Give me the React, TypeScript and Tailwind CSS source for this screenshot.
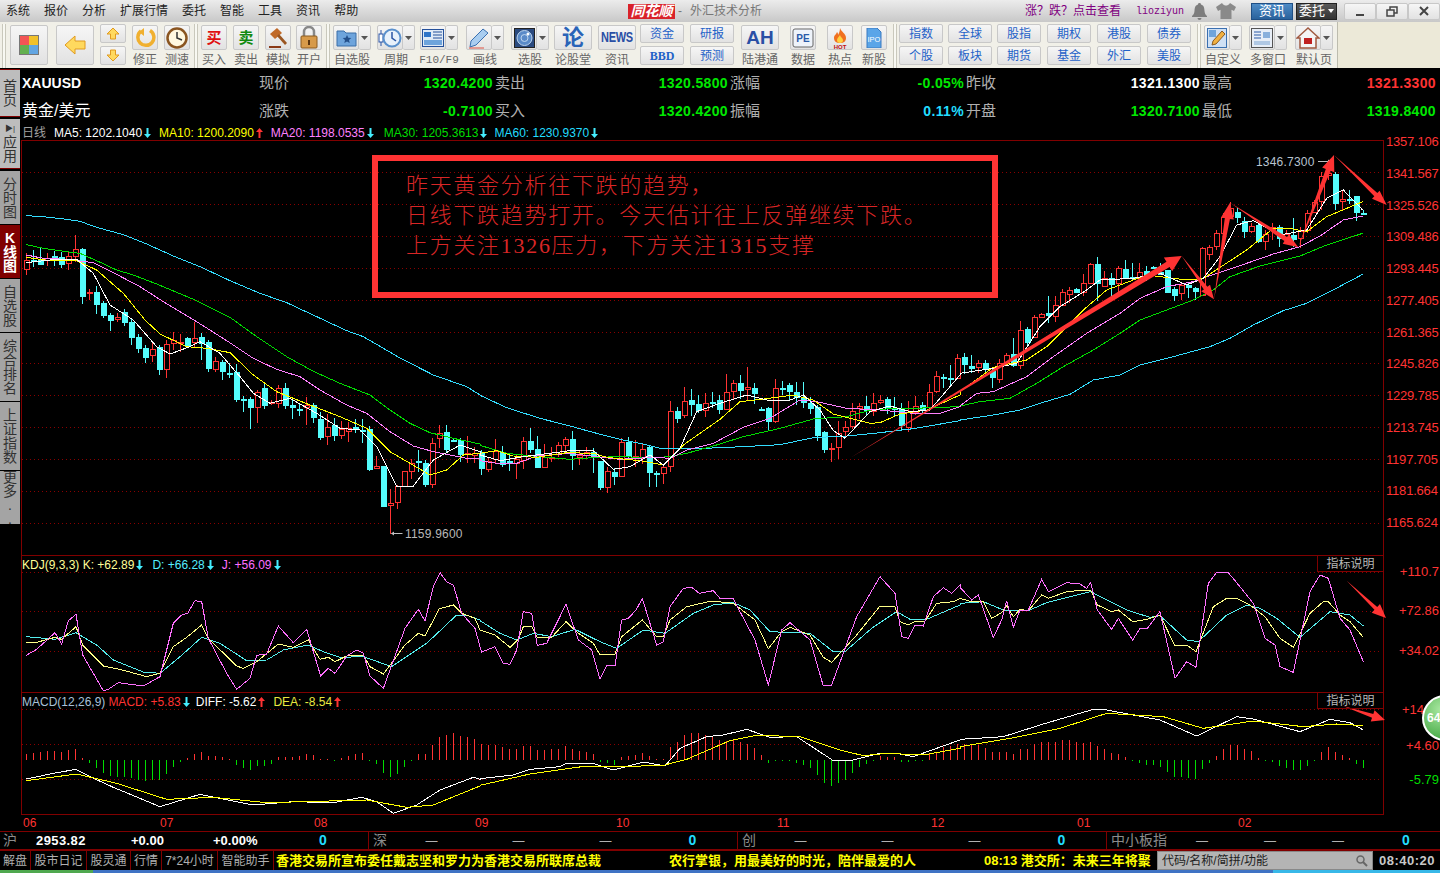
import type { ReactNode } from "react";

// coordinates below were read off 3x crops: (page x - ox) * 3, (page y - oy) * 3
const z = (ox: number, oy: number, s: string) =>
  s
    .trim()
    .split(/\s+/)
    .map((p) => {
      const [x, y] = p.split(",").map(Number);
      return `${ox + x / 3},${oy + y / 3}`;
    })
    .join(" ");

const CANDLES_A = `r370,390,418,435 c360,390,393,410 c352,388,402,404 r370,385,390,408 c362,378,383,408 c365,382,402,415 r365,378,400,420 r315,358,378,395 c355,358,497,522 r478,486,489,510 c468,486,522,552 c512,518,554,565 c550,556,570,602 r548,562,566,575 c538,546,575,588 c565,575,620,645 c612,620,653,668 c645,654,680,698 r640,658,676,696 c645,650,718,735 r630,643,718,745 r605,630,640,660 r612,636,640,665 c620,625,648,650 r575,625,635,652 c610,622,638,690 c630,636,713,725 r682,694,716,725 c690,696,724,750 c700,728,730,745 c702,727,806,815 c798,808,810,845 c800,808,830,898 r780,786,830,878 c760,775,824,838 r810,815,820,825 r765,773,820,833 c760,775,826,838 c810,826,832,868 c820,838,840,858 r800,826,832,884 c820,826,862,880 c845,868,920,930 r852,892,918,945 c865,885,916,932 r873,898,916,926 r875,893,902,935 c868,892,897,908 c868,900,902,938 c888,898,1016,1022 r978,1008,1014,1018 c1008,1008,1128,1132 r1078,1120,1126,1212 r1065,1068,1116,1138 r1024,1024,1068,1070 r988,998,1024,1048 c960,992,997,1025 c990,1000,1062,1070 r925,938,1062,1073 r885,908,925,955 c885,906,958,970 c928,930,932,935 c925,930,972,995 r918,968,970,998 r950,970,974,998`;
const CANDLES_B = `c330,340,385,405 r355,362,388,395 r297,332,358,370 c318,335,372,382 c340,362,368,392 r345,358,370,417 r292,304,360,388 c265,303,328,340 c288,328,380,382 r312,350,380,382 r320,350,352,366 r305,316,342,352 r292,298,315,340 c272,297,345,390 r332,345,352,375 r322,335,345,358 c325,335,348,398 c362,364,440,450 r380,392,440,458 c385,397,408,435 r295,307,408,410 c292,305,348,360 r300,348,352,380 r308,328,350,372 c316,320,395,440 c392,400,402,440 r376,380,400,432 r183,214,377,395 c200,214,235,248 r142,184,224,235 c148,180,192,228 c165,193,210,218 r160,188,210,230 c155,187,190,205 c165,181,208,222 r102,157,206,208 r120,130,152,180 c105,130,150,178 r82,142,148,180 c130,145,158,192 c200,206,208,212 c200,205,243,270 r118,145,243,250 c124,144,146,165 c128,136,153,182 c125,157,172,195 c126,172,185,203 c172,190,204,222 c195,200,285,302 c272,277,327,340 r310,323,326,365 r244,278,320,357 r242,260,272,295 r190,214,258,268 r188,197,205,238 c168,198,210,225 r160,190,212,228 r166,179,185,192 c170,178,205,222 c172,205,208,228 c188,208,255,270 r184,215,262,275 r168,197,215,225 c185,195,207,220 r132,157,202,210 r92,108,152,158 c103,110,113,145 c75,113,117,135 r43,55,115,118`;
const CANDLES_C = `c670,680,703,732 c675,708,714,730 r690,698,710,728 c690,700,716,728 c716,722,740,775 r686,698,748,758 r670,676,695,705 c625,672,706,710 r574,601,705,716 c590,597,636,648 r555,562,620,622 r550,551,560,560 c498,550,556,580 r498,524,558,575 r478,487,524,526 r470,480,493,518 c474,478,486,488 r432,458,485,498 r398,401,458,460 c380,402,458,512 r422,443,468,472 c430,444,462,498 r408,414,460,490 c390,418,445,448 c400,440,443,450 r398,425,440,452 c408,423,437,452 c408,411,413,415 c400,425,432,435 c420,420,485,490 c470,477,495,512 r462,464,490,510 c460,466,472,505 c470,474,484,510 r352,354,495,498 r345,350,372,390 r300,310,348,360 r250,260,310,330 r215,235,258,262 c235,245,262,280 c262,272,302,323 r278,287,302,310 c280,285,332,338 r300,312,332,360 r280,291,298,330 c285,292,324,350 r300,312,326,335 c265,316,326,352 r290,302,325,355 r240,248,300,308 r210,215,245,250 r125,137,212,240 r125,130,134,150 c125,133,218,240 r180,208,214,240 c180,208,210,222 c198,198,245,272 c240,248,250,252`;

type Candle = { up: boolean; hi: number; top: number; bot: number; lo: number };
const parseCandles = (s: string, off: number): Candle[] =>
  s
    .trim()
    .split(/\s+/)
    .map((t) => {
      const [hi, top, bot, lo] = t.slice(1).split(",").map(Number);
      const y = (v: number) => Math.round(130 + (v + off) / 3);
      return { up: t[0] === "r", hi: y(hi), top: y(top), bot: y(bot), lo: y(lo) };
    });
const CANDLES = [...parseCandles(CANDLES_A, 0), ...parseCandles(CANDLES_B, 630), ...parseCandles(CANDLES_C, 0)];

const MA_LINES = [
  {
    color: "#33ddff",
    pts: [
      z(0, 130, "79,257 130,260 200,268 240,274 290,292 370,314 440,342 520,378 600,410 690,452 780,490 860,518 950,560 1040,602 1090,620 1200,684 1300,735 1400,770 1440,795"),
      z(480, 340, "0,166 80,203 180,235 270,258 350,280 430,300 480,310 540,325 650,326 790,320 900,314 1000,293 1100,288 1200,278 1300,266 1440,242"),
      z(960, 130, "0,870 100,855 180,840 240,820 330,793 400,750 480,735 540,705 640,680 750,650 810,625 880,585 970,542 1040,520 1100,490 1208,433"),
    ],
  },
  {
    color: "#00dd00",
    pts: [
      z(0, 130, "79,344 130,355 200,365 240,370 290,392 350,420 400,435 470,462 590,512 690,562 770,620 860,680 940,724 1020,760 1110,795 1170,840 1230,880 1290,908 1360,925 1440,942"),
      z(480, 340, "0,316 80,340 180,350 270,358 350,352 420,350 520,353 570,350 620,340 700,318 790,290 900,265 1000,237 1100,230 1180,208 1300,205 1440,200"),
      z(960, 130, "0,828 60,815 150,805 230,760 310,710 400,660 480,610 540,570 620,540 700,510 760,480 810,440 900,408 1020,378 1100,345 1208,310"),
    ],
  },
  {
    color: "#ff80ff",
    pts: [
      z(0, 130, "79,375 130,385 200,388 280,398 340,428 420,470 490,515 590,575 680,632 760,685 830,718 900,740 960,780 1040,825 1100,850 1170,905 1240,948 1300,965 1400,985 1440,985"),
      z(480, 340, "0,362 50,370 110,370 170,348 270,340 350,350 420,358 520,352 570,355 620,330 700,310 790,262 870,235 960,180 1010,185 1100,205 1200,210 1300,220 1380,220 1440,200"),
      z(960, 130, "0,828 50,790 100,785 200,740 280,680 380,610 480,550 540,505 620,470 700,455 770,430 860,400 940,372 1020,350 1080,318 1150,270 1208,258"),
    ],
  },
  {
    color: "#ffff00",
    pts: [
      z(0, 130, "79,382 150,392 230,392 290,420 370,490 435,570 480,612 560,650 620,655 690,668 760,735 830,785 930,825 1020,860 1100,895 1170,965 1290,1035 1340,1020 1390,975 1440,970"),
      z(480, 340, "0,340 50,332 100,348 170,352 260,338 340,340 380,352 480,362 550,375 610,315 720,238 780,185 860,176 940,165 1000,180 1060,222 1170,250 1200,248 1260,222 1340,210 1440,165"),
      z(960, 130, "0,785 100,712 200,690 260,650 370,540 440,480 560,435 680,450 730,445 860,360 940,295 990,295 1040,305 1100,260 1208,215"),
    ],
  },
  {
    color: "#ffffff",
    pts: [
      z(0, 130, "79,398 150,390 230,388 280,430 330,525 400,570 470,650 510,672 570,650 600,635 660,670 720,740 760,790 810,820 870,805 950,850 1020,895 1080,900 1130,950 1190,1068 1240,1068 1300,990 1380,945 1440,965"),
      z(480, 340, "0,345 60,362 130,350 270,332 340,332 400,388 450,380 510,345 550,375 600,325 650,215 720,190 800,165 860,180 930,180 970,165 1020,210 1060,272 1095,295 1170,215 1230,198 1290,215 1350,210 1440,105"),
      z(960, 130, "0,730 100,715 170,700 240,590 300,530 380,480 420,450 520,445 600,430 680,465 730,445 780,380 830,285 880,272 960,315 1040,300 1100,205 1150,180 1208,240"),
    ],
  },
];

const KDJ_LINES = [
  {
    color: "#55eeee",
    pts: [
      z(0, 550, "79,260 165,268 228,248 290,285 340,330 430,366 480,370 540,320 605,262 660,280 740,332 800,330 850,300 925,285 970,305 1020,322 1090,320 1175,350 1280,280 1370,195 1400,195 1440,210"),
      z(480, 550, "0,212 60,250 110,270 160,250 215,260 285,238 360,275 410,295 490,240 555,250 640,190 700,165 760,158 810,180 870,245 990,250 1060,305 1095,305 1175,235 1250,185 1290,208 1335,210 1440,165"),
      z(960, 550, "0,160 70,155 130,180 205,182 260,158 390,125 500,180 570,202 600,197 680,270 715,275 800,195 860,165 900,175 950,205 1020,262 1110,185 1170,195 1210,228"),
    ],
  },
  {
    color: "#ffff88",
    pts: [
      z(0, 550, "79,277 110,277 165,262 185,268 228,230 248,285 310,348 360,358 440,380 480,370 520,290 560,262 605,225 625,265 710,348 730,355 770,335 835,282 880,292 925,270 960,328 985,322 1005,335 1040,318 1090,315 1110,350 1150,372 1215,285 1255,250 1275,258 1318,176 1360,165 1385,190 1425,205 1440,240"),
      z(480, 550, "0,240 45,255 90,292 115,268 130,230 155,230 172,264 215,262 258,215 295,250 340,280 360,315 405,312 425,260 487,210 530,260 550,260 570,210 620,170 695,153 760,160 825,210 865,296 905,245 930,232 990,255 1030,322 1055,337 1130,255 1200,168 1245,170 1260,215 1285,225 1305,215 1335,213 1370,160 1420,155 1440,145"),
      z(960, 550, "0,145 35,155 70,155 95,205 125,188 140,168 160,200 180,178 205,182 245,135 265,145 320,125 375,120 392,120 412,165 455,185 475,180 518,215 560,208 600,195 645,288 680,285 708,305 760,170 800,145 830,145 870,165 915,200 960,265 1000,292 1050,190 1090,155 1105,155 1140,195 1170,215 1210,262"),
    ],
  },
  {
    color: "#ff70ff",
    pts: [
      z(0, 550, "79,316 110,298 165,248 185,282 205,212 228,193 248,315 310,422 325,418 355,398 430,408 480,380 520,220 545,195 563,190 585,152 605,155 625,265 680,370 710,418 750,385 770,316 800,312 835,228 880,278 920,238 962,378 985,355 1005,370 1040,318 1070,300 1090,310 1110,378 1150,415 1215,235 1255,178 1275,213 1300,110 1320,68 1340,95 1360,105 1385,190 1425,235 1440,290"),
      z(480, 550, "0,292 5,306 45,290 70,340 90,343 110,300 130,185 155,190 172,286 200,280 258,163 295,270 335,300 360,388 380,347 405,347 425,210 445,205 468,180 487,146 530,285 550,275 570,170 610,115 635,112 658,130 700,122 720,145 760,147 825,270 865,405 905,240 930,218 990,270 1030,408 1055,405 1130,200 1200,80 1245,130 1265,260 1285,265 1305,225 1330,228 1360,140 1390,113 1415,130 1440,105"),
      z(960, 550, "0,112 35,150 55,135 100,262 125,210 140,152 160,232 180,180 205,180 245,88 265,125 320,98 360,102 380,115 392,97 412,180 455,238 475,205 518,270 540,235 562,235 600,185 645,385 680,335 708,352 745,100 770,67 805,68 830,98 880,160 915,265 945,285 960,350 1000,367 1050,125 1080,75 1105,85 1140,205 1170,240 1210,335"),
    ],
  },
];

const MACD_LINES = [
  {
    color: "#ffffff",
    pts: [
      z(0, 550, "79,687 160,670 228,658 270,680 340,712 480,770 600,733 760,765 880,755 1000,758 1085,742 1130,755 1180,790 1250,765 1320,720 1420,682 1440,688"),
      z(480, 550, "0,686 100,675 150,658 240,650 260,640 340,640 400,660 490,636 555,648 600,595 680,560 730,555 800,538 870,562 950,560 1060,632 1110,632 1200,610 1250,610 1300,620 1440,570"),
      z(960, 550, "0,568 130,560 250,522 400,478 440,480 600,510 710,558 830,500 880,507 1020,545 1110,508 1170,518 1210,540"),
    ],
  },
  {
    color: "#ffff00",
    pts: [
      z(0, 550, "79,692 230,672 350,700 500,748 640,742 800,758 1100,750 1220,772 1300,765 1440,708"),
      z(480, 550, "0,706 150,672 320,648 420,650 550,646 620,628 750,572 830,556 960,560 1080,600 1150,617 1220,610 1330,615 1440,595"),
      z(960, 550, "0,590 150,565 300,535 440,490 610,500 730,535 880,513 1030,530 1130,522 1210,527"),
    ],
  },
];

const MACD_BARS = [
  612, 610, 606, 603, 603, 606, 600, 597, 625, 638, 655, 670, 678, 680, 682, 685, 690, 692, 690, 690, 672, 652, 636, 625, 612, 605, 618, 618, 622, 626, 645, 653, 660, 648, 648, 642, 622, 622, 622, 618, 612, 615, 627, 627, 630, 625, 618, 612, 608, 632, 642, 668, 680, 672, 652, 630, 612, 612, 585, 560, 555, 548, 558, 562, 568,
  582, 585, 585, 590, 598, 598, 588, 588, 600, 600, 598, 597, 588, 598, 603, 606, 612, 636, 640, 645, 622, 618, 615, 610, 618, 626, 626, 590, 575, 555, 550, 550, 555, 560, 570, 572, 570, 576, 582, 595, 615, 638, 632, 630, 630, 640, 645, 655, 675, 698, 708, 700, 690, 668, 650, 642, 630, 618, 620, 620, 636, 636, 630, 630, 612, 605, 592, 588, 582,
  582, 585, 585, 595, 605, 605, 605, 612, 597, 597, 582, 577, 577, 577, 570, 570, 575, 580, 575, 588, 597, 610, 612, 622, 630, 638, 645, 645, 652, 667, 682, 682, 685, 688, 657, 640, 618, 597, 585, 585, 597, 603, 625, 630, 635, 648, 655, 660, 660, 648, 632, 605, 591, 606, 615, 625, 642, 655,
];

const arrowPts = (tx: number, ty: number, px: number, py: number, hl = 15, hw = 7, bw = 2.6) => {
  const len = Math.hypot(px - tx, py - ty);
  const dx = (px - tx) / len;
  const dy = (py - ty) / len;
  const bx = px - dx * hl;
  const by = py - dy * hl;
  const nx = -dy;
  const ny = dx;
  return [
    [tx, ty],
    [bx + nx * bw, by + ny * bw],
    [bx + nx * hw, by + ny * hw],
    [px, py],
    [bx - nx * hw, by - ny * hw],
    [bx - nx * bw, by - ny * bw],
  ]
    .map((p) => p.join(","))
    .join(" ");
};

const MAIN_GRID = [172, 204, 236, 268, 300, 332, 363, 395, 427, 459, 491, 523];
const AXIS_LABELS = ["1357.106", "1341.567", "1325.526", "1309.486", "1293.445", "1277.405", "1261.365", "1245.826", "1229.785", "1213.745", "1197.705", "1181.664", "1165.624"];

const Dots = ({ ys }: { ys: number[] }) => (
  <>
    {ys.map((y) => (
      <line key={y} x1={22} x2={1382} y1={y + 0.5} y2={y + 0.5} stroke="#8a0000" strokeDasharray="1 3" />
    ))}
  </>
);

const Arrow = ({ up, className = "" }: { up: boolean; className?: string }) => (
  <svg width="7" height="10" viewBox="0 0 7 10" className={`mx-[2px] inline-block ${className}`}>
    {up ? <path d="M3.5 0 7 4H4.5v6h-2V4H0z" fill="#ff3333" /> : <path d="M3.5 10 7 6H4.5V0h-2v6H0z" fill="#44eeff" />}
  </svg>
);

const TABS = [
  { t: "首页", c: "h-[48px] mb-[2px] bg-[#bdbdbd] border-y border-[#800000]" },
  { t: "应用", c: "h-[50px] mb-[2px] bg-[#bdbdbd] border-b border-[#800000]", icon: true },
  { t: "分时图", c: "h-[53px] mb-[1px] bg-[#a4a4a4]" },
  { t: "K线图", c: "h-[53px] mb-[1px] bg-[#800000] text-white font-bold" },
  { t: "自选股", c: "h-[53px] mb-[1px] bg-[#a4a4a4]" },
  { t: "综合排名", c: "h-[68px] mb-[1px] bg-[#a4a4a4]" },
  { t: "上证指数", c: "h-[68px] mb-[1px] bg-[#a4a4a4]" },
  { t: "更多..", c: "h-[53px] bg-[#a4a4a4]" },
];

const BtnFace = ({ children, className = "" }: { children: ReactNode; className?: string }) => (
  <div className={`flex items-center justify-center rounded-[2px] border border-[#c8c8c8] bg-gradient-to-b from-[#f6f6f6] to-[#e2e2e2] ${className}`}>{children}</div>
);

const Tool = ({ label, cls, split, children, labelCls = "" }: { label: string; cls: string; split?: boolean; children: ReactNode; labelCls?: string }) => (
  <div className={`mt-[1px] flex shrink-0 flex-col items-center ${cls}`}>
    <div className="flex h-[25px] w-full">
      <BtnFace className="min-w-0 flex-1">{children}</BtnFace>
      {split && (
        <BtnFace className="w-[12px] border-l-0">
          <svg width="7" height="4" viewBox="0 0 7 4">
            <path d="M0 0h7L3.5 4z" fill="#555" />
          </svg>
        </BtnFace>
      )}
    </div>
    <span className={`mt-[2px] whitespace-nowrap text-[12px] leading-[16px] text-[#666] ${labelCls}`}>{label}</span>
  </div>
);

const Pair = ({ a, b, cls, serif }: { a: string; b: string; cls: string; serif?: boolean }) => (
  <div className={`flex shrink-0 flex-col gap-[3px] text-[12px] text-[#1f62c8] ${cls}`}>
    <BtnFace className="h-[19px]">{a}</BtnFace>
    <BtnFace className={`h-[19px] ${serif ? "font-['Liberation_Serif'] font-bold" : ""}`}>{b}</BtnFace>
  </div>
);

const Sep = ({ cls }: { cls: string }) => (
  <div className={`h-[44px] w-[4px] shrink-0 border-x border-[#c9c8bc] bg-[#f8f8f2] ${cls}`} />
);

const Quote = ({ label, value, color }: { label: string; value: string; color: string }) => (
  <div className="flex h-[28px] items-center justify-between pr-[2px]">
    <span className="text-[15px] text-[#b0b0b0]">{label}</span>
    <span className={`text-[14px] font-bold tracking-[0.35px] ${color}`}>{value}</span>
  </div>
);

const AxisLabel = ({ children, cls }: { children: ReactNode; cls: string }) => (
  <div className={`whitespace-nowrap text-[13px] leading-[16px] ${cls}`}>{children}</div>
);

const IndexStat = ({ name, nameCls, cell }: { name: string; nameCls: string; cell: string }) => (
  <div className="flex h-full items-center border-l border-[#800000] font-normal">
    <span className={`whitespace-nowrap pl-[4px] text-[14px] text-[#8c8c8c] ${nameCls}`}>{name}</span>
    {[0, 1, 2].map((i) => (
      <span key={i} className={`text-center text-[12px] text-[#b0b0b0] ${cell}`}>
        —
      </span>
    ))}
    <span className={`text-center text-[14px] font-bold text-[#22ddff] ${cell}`}>0</span>
  </div>
);

export default function App() {
  return (
    <div className="flex h-[873px] w-[1440px] flex-col overflow-hidden bg-black font-['Liberation_Sans','Noto_Sans_CJK_SC',sans-serif]">
      {/* TITLE BAR */}
      <div className="flex h-[22px] shrink-0 items-center bg-gradient-to-b from-[#ececec] to-[#c8c8c8] text-[12px] text-[#222]">
        <div className="ml-[6px] flex w-[351px] gap-[14px] whitespace-nowrap">
          <span>系统</span>
          <span>报价</span>
          <span>分析</span>
          <span>扩展行情</span>
          <span>委托</span>
          <span>智能</span>
          <span>工具</span>
          <span>资讯</span>
          <span>帮助</span>
        </div>
        <div className="ml-[271px] flex h-[15px] w-[47px] items-center justify-center bg-[#d9222a] text-[14px] font-bold italic leading-none text-white">同花顺</div>
        <span className="ml-[3px] flex w-[85px] gap-[8px] whitespace-nowrap text-[12px] text-[#777]">
          <span>-</span>
          <span>外汇技术分析</span>
        </span>
        <span className="ml-[262px] w-[96px] whitespace-nowrap text-[12px] text-[#800080]">涨？跌？点击查看</span>
        <span className="ml-[15px] w-[49px] font-['Liberation_Mono'] text-[10px] text-[#800080]">lioziyun</span>
        <svg className="ml-[7px]" width="15" height="17" viewBox="0 0 15 17">
          <path d="M7.5 0a1.5 1.5 0 0 1 1.5 1.6C12 2.4 12.3 5 12.5 8c.2 2.4 1 3.7 2.5 5v1H0v-1c1.5-1.3 2.300-2.600 2.500-5C2.700 5 3 2.400 6 1.600A1.500 1.500 0 0 1 7.500 0zM5.500 15h4a2 2 0 0 1-4 0z" fill="#7d7d7d" />
        </svg>
        <svg className="ml-[9px]" width="20" height="16" viewBox="0 0 20 16">
          <path d="M6 0 0 4l2 4 2.500-1.200V16h11V6.800L18 8l2-4-6-4c-1 2-3 2.500-4 2.500S7 2 6 0z" fill="#8a8a8a" />
        </svg>
        <div className="ml-[15px] flex h-[17px] w-[42px] items-center justify-center border border-[#1f4f85] bg-gradient-to-b from-[#4d8bc6] to-[#2a629c] text-[13px] text-white">资讯</div>
        <div className="ml-[3px] flex h-[17px] w-[41px] items-center justify-center gap-[3px] border border-[#222] bg-gradient-to-b from-[#5a5a5a] to-[#333] text-[13px] text-white">
          委托
          <svg width="6" height="4" viewBox="0 0 6 4">
            <path d="M0 0h6L3 4z" fill="#fff" />
          </svg>
        </div>
        <div className="ml-[7px] flex h-[17px] w-[96px]">
          {["min", "max", "close"].map((k) => (
            <BtnFace key={k} className="h-full w-[32px] border-[#aaa] from-[#e8e8e8] to-[#c6c6c6]">
              <svg width="14" height="12" viewBox="0 0 14 12" fill="none" stroke="#444" strokeWidth="1.500">
                {k === "min" && <path d="M3 10h8" strokeWidth="2" />}
                {k === "max" && <path d="M2 5h7v6H2zM5 5V2h7v6h-3" />}
                {k === "close" && <path d="m3 2 8 8M11 2l-8 8" strokeWidth="2" />}
              </svg>
            </BtnFace>
          ))}
        </div>
      </div>

      {/* TOOLBAR */}
      <div className="flex h-[46px] shrink-0 bg-[#ece9d8]">
        <div className="flex h-full w-[1338px] items-start border-r border-[#bdbcae] bg-[#f1f0e8] pt-[2px]">
          <Sep cls="ml-[2px]" />
          <BtnFace className="ml-[4px] mt-[1px] h-[40px] w-[38px] shrink-0">
            <div className="grid h-[20px] w-[20px] grid-cols-2 border border-[#777]">
              <div className="bg-[#f25555]" />
              <div className="bg-[#f1c12a]" />
              <div className="bg-[#63b04f]" />
              <div className="bg-[#62a5e2]" />
            </div>
          </BtnFace>
          <BtnFace className="ml-[8px] mt-[1px] h-[40px] w-[38px] shrink-0">
            <svg width="22" height="20" viewBox="0 0 22 20">
              <path d="M1 10 11 1v5h10v8H11v5z" fill="#ffd95e" stroke="#e09a20" />
            </svg>
          </BtnFace>
          <div className="ml-[6px] flex w-[26px] shrink-0 flex-col gap-[3px]">
            <BtnFace className="h-[19px]">
              <svg width="14" height="13" viewBox="0 0 14 13">
                <path d="M7 1 13 7H9.500v5h-5V7H1z" fill="#ffd95e" stroke="#e09a20" />
              </svg>
            </BtnFace>
            <BtnFace className="h-[19px]">
              <svg width="14" height="13" viewBox="0 0 14 13">
                <path d="M7 12 1 6h3.500V1h5v5H13z" fill="#ffd95e" stroke="#e09a20" />
              </svg>
            </BtnFace>
          </div>
          <Tool label="修正" cls="ml-[6px] w-[26px]">
            <svg width="22" height="22" viewBox="0 0 22 22" fill="none">
              <path d="M7 4a8 8 0 1 0 9-.500" stroke="#f0b030" strokeWidth="3.500" />
              <path d="M10 1v8L5 5z" fill="#f0b030" />
            </svg>
          </Tool>
          <Tool label="测速" cls="ml-[6px] w-[26px]">
            <svg width="22" height="22" viewBox="0 0 22 22">
              <circle cx="11" cy="11" r="9.500" fill="#fff8e0" stroke="#8a5520" strokeWidth="2.500" />
              <path d="M11 5v6l5 2" fill="none" stroke="#333" strokeWidth="1.500" />
            </svg>
          </Tool>
          <Sep cls="ml-[4px]" />
          <Tool label="买入" cls="ml-[3px] w-[26px]">
            <span className="text-[15px] font-bold leading-none text-[#e01010]">买</span>
          </Tool>
          <Tool label="卖出" cls="ml-[6px] w-[26px]">
            <span className="text-[15px] font-bold leading-none text-[#108a10]">卖</span>
          </Tool>
          <Tool label="模拟" cls="ml-[6px] w-[26px]">
            <svg width="22" height="22" viewBox="0 0 22 22">
              <path d="M3 7 10 1l5 5-7 6z" fill="#c06a28" />
              <path d="m10 9 2-2 8 9-2 2z" fill="#9a5520" />
              <path d="M2 19h12v2H2z" fill="#8a3a18" />
            </svg>
          </Tool>
          <Tool label="开户" cls="ml-[5px] w-[26px]">
            <svg width="20" height="23" viewBox="0 0 20 23">
              <path d="M5 11V6a5 5 0 0 1 10 0v5" fill="none" stroke="#888" strokeWidth="2.500" />
              <rect x="2" y="10" width="16" height="12" rx="1" fill="#d79a4a" stroke="#8a5a20" />
              <path d="M9 14h2v5H9z" fill="#5a3510" />
            </svg>
          </Tool>
          <Sep cls="ml-[4px]" />
          <Tool label="自选股" cls="ml-[3px] w-[38px]" split>
            <svg width="21" height="19" viewBox="0 0 21 19">
              <path d="M1 3h7l2 2h10v13H1z" fill="#6ea4dc" stroke="#3a6ea8" />
              <path d="m11 7 1.300 2.800 3 .3-2.300 2 .7 3-2.700-1.600-2.700 1.600.7-3-2.300-2 3-.3z" fill="#244f8a" />
            </svg>
          </Tool>
          <Tool label="周期" cls="ml-[6px] w-[38px]" split>
            <svg width="24" height="22" viewBox="0 0 24 22">
              <path d="M3 3v16" stroke="#2a55a5" />
              <rect x="1" y="7" width="4" height="8" fill="#fff" stroke="#2a55a5" />
              <circle cx="14" cy="11" r="8.500" fill="#e8f1fb" stroke="#5a90cc" strokeWidth="2" />
              <path d="M14 5v6l4 3" fill="none" stroke="#2a55a5" strokeWidth="1.500" />
            </svg>
          </Tool>
          <Tool label="F10/F9" cls="ml-[5px] w-[38px]" split labelCls="font-['Liberation_Mono'] !text-[11px]">
            <svg width="22" height="18" viewBox="0 0 22 18">
              <rect x=".5" y=".5" width="21" height="17" fill="#dfe9f6" stroke="#24509a" />
              <path d="M2 3h7v5H2z" fill="#2f74c8" />
              <path d="M11 3h9M11 6h9M11 9h9" stroke="#24509a" />
              <path d="M2 11h18v5H2z" fill="#6ea4dc" />
            </svg>
          </Tool>
          <Tool label="画线" cls="ml-[8px] w-[38px]" split>
            <svg width="22" height="22" viewBox="0 0 22 22">
              <path d="m15 2 5 4L8 18l-6 2 1-6z" fill="#a9cdf0" stroke="#3a70b0" />
              <path d="M1 21h15" stroke="#e05040" />
            </svg>
          </Tool>
          <Tool label="选股" cls="ml-[7px] w-[38px]" split>
            <svg width="21" height="20" viewBox="0 0 21 20">
              <rect x=".5" y=".5" width="20" height="19" fill="#2a4a80" stroke="#222" />
              <circle cx="10.500" cy="10" r="7.500" fill="#5a8ac8" stroke="#bcd4ee" />
              <circle cx="10.500" cy="10" r="3.500" fill="none" stroke="#bcd4ee" />
              <circle cx="14" cy="6" r="1.500" fill="#fff" />
            </svg>
          </Tool>
          <Tool label="论股堂" cls="ml-[5px] w-[38px]">
            <span className="text-[22px] font-bold leading-none text-[#2a64b8]">论</span>
          </Tool>
          <Tool label="资讯" cls="ml-[6px] w-[38px]">
            <span className="text-[11px] font-bold leading-none tracking-[-0.3px] text-[#2a4fa5] [transform:scaleY(1.400)]">NEWS</span>
          </Tool>
          <Pair a="资金" b="BBD" cls="ml-[4px] w-[44px]" serif />
          <Pair a="研报" b="预测" cls="ml-[6px] w-[44px]" />
          <Tool label="陆港通" cls="ml-[7px] w-[38px]">
            <span className="text-[19px] font-bold leading-none text-[#2a4fa5]">AH</span>
          </Tool>
          <Tool label="数据" cls="ml-[11px] w-[26px]">
            <svg width="22" height="20" viewBox="0 0 22 20">
              <rect x="1" y="1" width="20" height="18" rx="2" fill="#eef3fa" stroke="#666" />
              <text x="11" y="14" textAnchor="middle" fontSize="10" fontWeight="700" fill="#2a5aa8">PE</text>
            </svg>
          </Tool>
          <Tool label="热点" cls="ml-[11px] w-[26px]">
            <svg width="20" height="22" viewBox="0 0 20 22">
              <path d="M10 1c1 4 6 5 6 10 0 3-2 5-6 5s-6-2-6-5c0-3 2-3 3-6 1 1 1 2 1 3 1-2 2-4 2-7z" fill="#f07020" />
              <path d="M10 8c0 2 3 3 3 5s-1 3-3 3-3-1-3-3 2-3 3-5z" fill="#ffd040" />
              <text x="10" y="21.500" textAnchor="middle" fontSize="6" fontWeight="700" fill="#c01010">HOT</text>
            </svg>
          </Tool>
          <Tool label="新股" cls="ml-[8px] w-[26px]">
            <svg width="16" height="20" viewBox="0 0 16 20">
              <path d="M1 0h10l4 4v16H1z" fill="#5aa5e8" stroke="#3a7ac0" />
              <text x="8" y="14" textAnchor="middle" fontSize="7.500" fill="#fff">IPO</text>
            </svg>
          </Tool>
          <Sep cls="ml-[6px]" />
          <Pair a="指数" b="个股" cls="ml-[2px] w-[44px]" />
          <Pair a="全球" b="板块" cls="ml-[5px] w-[44px]" />
          <Pair a="股指" b="期货" cls="ml-[5px] w-[44px]" />
          <Pair a="期权" b="基金" cls="ml-[6px] w-[44px]" />
          <Pair a="港股" b="外汇" cls="ml-[6px] w-[44px]" />
          <Pair a="债券" b="美股" cls="ml-[6px] w-[44px]" />
          <Sep cls="ml-[6px]" />
          <Tool label="自定义" cls="ml-[3px] w-[38px]" split>
            <svg width="20" height="20" viewBox="0 0 20 20">
              <rect x=".5" y=".5" width="19" height="19" fill="#cfe0f4" stroke="#3a70b0" />
              <path d="M2 2h7v7H2z" fill="#6ea4dc" />
              <path d="m15 3 3 3-9 10-4 1 1-4z" fill="#f0b040" stroke="#8a5a20" />
            </svg>
          </Tool>
          <Tool label="多窗口" cls="ml-[7px] w-[38px]" split>
            <svg width="22" height="20" viewBox="0 0 22 20">
              <rect x=".5" y=".5" width="21" height="19" fill="#e8eef7" stroke="#555" />
              <path d="M3 4h7M3 7h7M3 10h7" stroke="#2a5aa8" />
              <path d="M12 4h7v6h-7z" fill="#8ab0dc" />
              <path d="M3 13h16v4H3z" fill="#b0c8e4" />
            </svg>
          </Tool>
          <Tool label="默认页" cls="ml-[8px] w-[38px]" split>
            <svg width="24" height="22" viewBox="0 0 24 22">
              <path d="M12 1 1 11h3v10h16V11h3z" fill="#f4f4f4" stroke="#a05a40" strokeWidth="1.500" />
              <rect x="8" y="11" width="8" height="6" fill="#c02020" />
            </svg>
          </Tool>
        </div>
      </div>

      {/* MAIN */}
      <div className="flex h-[763px] shrink-0 pt-[1px]">
        <div className="flex w-[21px] shrink-0 flex-col">
          {TABS.map((tab) => (
            <div key={tab.t} className={`flex w-[20px] flex-col items-center justify-center text-[14px] leading-[14px] text-[#333] ${tab.c}`}>
              {tab.icon && <span className="mb-[2px] text-[8px] leading-[8px]">▶|</span>}
              {Array.from(tab.t).map((ch, i) => (
                <span key={i}>{ch}</span>
              ))}
            </div>
          ))}
        </div>

        <div className="flex min-w-0 flex-1 flex-col">
          {/* QUOTE PANEL */}
          <div className="grid h-[56px] shrink-0 grid-cols-[237px_236px_235px_236px_236px_236px] pl-[1px]">
            <div className="flex flex-col text-white">
              <div className="flex h-[28px] items-center text-[14px] font-bold">XAUUSD</div>
              <div className="flex h-[28px] items-center text-[16px]">黄金/美元</div>
            </div>
            <div>
              <Quote label="现价" value="1320.4200" color="text-[#00e800]" />
              <Quote label="涨跌" value="-0.7100" color="text-[#00e800]" />
            </div>
            <div>
              <Quote label="卖出" value="1320.5800" color="text-[#00e800]" />
              <Quote label="买入" value="1320.4200" color="text-[#00e800]" />
            </div>
            <div>
              <Quote label="涨幅" value="-0.05%" color="text-[#00e800]" />
              <Quote label="振幅" value="0.11%" color="text-[#22ddff]" />
            </div>
            <div>
              <Quote label="昨收" value="1321.1300" color="text-white" />
              <Quote label="开盘" value="1320.7100" color="text-[#00e800]" />
            </div>
            <div>
              <Quote label="最高" value="1321.3300" color="text-[#ff3333]" />
              <Quote label="最低" value="1319.8400" color="text-[#00e800]" />
            </div>
          </div>

          {/* MA LEGEND */}
          <div className="flex h-[15px] shrink-0 items-center whitespace-nowrap pl-[1px] text-[12px] leading-[14px]">
            <span className="mr-[8px] text-[#a0a0a0]">日线</span>
            <span className="text-white">MA5: 1202.1040</span>
            <Arrow up={false} />
            <span className="ml-[6px] text-[#ffff00]">MA10: 1200.2090</span>
            <Arrow up />
            <span className="ml-[6px] text-[#ff80ff]">MA20: 1198.0535</span>
            <Arrow up={false} />
            <span className="ml-[8px] text-[#00dd00]">MA30: 1205.3613</span>
            <Arrow up={false} />
            <span className="ml-[5px] text-[#22ddff]">MA60: 1230.9370</span>
            <Arrow up={false} />
          </div>

          {/* PRICE CHART */}
          <div className="flex h-[415px] shrink-0">
            <div className="relative h-full w-[1363px] shrink-0 border-x border-t border-[#800000]">
              <svg width="1361" height="414" viewBox="22 141 1361 414" className="relative z-10 block overflow-visible">
                <Dots ys={MAIN_GRID} />
                {CANDLES.map((c, i) => {
                  const x = 26 + 7 * i;
                  const color = c.up ? "#ff3333" : "#54fcfc";
                  const h = Math.max(c.bot - c.top, 1);
                  return (
                    <g key={i} shapeRendering="crispEdges">
                      <rect x={x} y={c.hi} width={1} height={Math.max(c.lo - c.hi, 1)} fill={color} />
                      {c.up ? (
                        <rect x={x - 1.5} y={c.top + 0.5} width={5} height={h} fill="#000" stroke={color} />
                      ) : (
                        <rect x={x - 2} y={c.top} width={6} height={h + 1} fill={color} />
                      )}
                    </g>
                  );
                })}
                {MA_LINES.map((l) => (
                  <polyline key={l.color} points={l.pts.join(" ")} fill="none" stroke={l.color} strokeWidth="1" shapeRendering="crispEdges" />
                ))}
                <path d="M391.500 533.500h11" stroke="#c0c0c0" />
                <path d="M391 533.500l3-2v4z" fill="#c0c0c0" />
                <text x="405" y="538" fontSize="12" letterSpacing="0.2" fill="#b8b8b8">1159.9600</text>
                <text x="1256" y="166" fontSize="12" letterSpacing="0.2" fill="#b8c4d0">1346.7300</text>
                <path d="M1318 161.500h12" stroke="#c0c0c0" />
                <path d="M1331 161.500l-3-2v4z" fill="#c0c0c0" />
                {[
                  [850, 458, 1181.7, 256, 16, 8, 3],
                  [1181.7, 256, 1214, 299.3, 14, 5.5, 2.2],
                  [1214, 299.3, 1230, 202.7, 16, 6.5, 2.6],
                  [1230, 202.7, 1298.3, 247.3, 15, 5.5, 2.4],
                  [1298.3, 247.3, 1334, 155, 16, 6.5, 2.6],
                  [1334, 155, 1386.7, 205, 15, 5.5, 2.2],
                ].map((a) => (
                  <polygon key={a[0]} points={arrowPts(a[0], a[1], a[2], a[3], a[4], a[5], a[6])} fill="#ff3333" />
                ))}
              </svg>
              <div className="absolute left-[350px] top-[14px] z-20 h-[143px] w-[626px] border-[6px] border-[#ff3333] pl-[28px] pt-[10px] font-['Liberation_Serif','Noto_Sans_CJK_SC',serif] text-[22px] font-light leading-[30px] tracking-[1.700px] text-[#d82626]">
                <div className="whitespace-nowrap">昨天黄金分析往下跌的趋势，</div>
                <div className="whitespace-nowrap">日线下跌趋势打开。今天估计往上反弹继续下跌。</div>
                <div className="whitespace-nowrap">上方关注1326压力，下方关注1315支撑</div>
              </div>
            </div>
            <div className="-mt-[6px] flex w-[56px] shrink-0 flex-col pl-[2px]">
              {AXIS_LABELS.map((v) => (
                <AxisLabel key={v} cls="h-[31.75px] tracking-[-0.2px] text-[#ff3333]">
                  {v}
                </AxisLabel>
              ))}
            </div>
          </div>

          {/* KDJ */}
          <div className="flex h-[137px] shrink-0">
            <div className="relative h-full w-[1363px] shrink-0 border-x border-t border-[#800000]">
              <svg width="1361" height="136" viewBox="22 556 1361 136" className="relative z-10 block overflow-visible">
                <Dots ys={[572, 611, 651]} />
                {KDJ_LINES.map((l) => (
                  <polyline key={l.color} points={l.pts.join(" ")} fill="none" stroke={l.color} strokeWidth="1" shapeRendering="crispEdges" />
                ))}
                <polygon points={arrowPts(1346.7, 580.7, 1386, 618, 14, 6, 2)} fill="#ff3333" />
              </svg>
              <div className="absolute left-0 top-0 z-20 flex h-[17px] items-center whitespace-nowrap text-[12px]">
                <span className="text-[#ffff99]">KDJ(9,3,3) K: +62.89</span>
                <Arrow up={false} />
                <span className="ml-[7px] text-[#55eeff]">D: +66.28</span>
                <Arrow up={false} />
                <span className="ml-[6px] text-[#ff70ff]">J: +56.09</span>
                <Arrow up={false} />
              </div>
              <div className="absolute right-0 top-0 z-20 flex h-[16px] w-[66px] items-center justify-center border-b border-l border-[#800000] text-[12px] text-[#b8b8b8]">指标说明</div>
            </div>
            <div className="flex w-[56px] shrink-0 flex-col items-end pr-[1px] pt-[9px]">
              <AxisLabel cls="h-[39px] text-[#ff3333]">+110.7</AxisLabel>
              <AxisLabel cls="h-[40px] text-[#ff3333]">+72.86</AxisLabel>
              <AxisLabel cls="text-[#ff3333]">+34.02</AxisLabel>
            </div>
          </div>

          {/* MACD */}
          <div className="flex h-[123px] shrink-0">
            <div className="relative h-full w-[1363px] shrink-0 border border-[#800000]">
              <svg width="1361" height="121" viewBox="22 693 1361 121" className="relative z-10 block overflow-visible">
                <Dots ys={[709, 744, 779]} />
                {MACD_BARS.map((v, i) => {
                  const y = 550 + v / 3;
                  const up = v < 628;
                  return (
                    <rect
                      key={i}
                      x={26 + 7 * i}
                      y={up ? y : 760}
                      width={1}
                      height={Math.max(Math.abs(y - 760), 1)}
                      fill={up ? "#ff3333" : "#00dd00"}
                      shapeRendering="crispEdges"
                    />
                  );
                })}
                {MACD_LINES.map((l) => (
                  <polyline key={l.color} points={l.pts.join(" ")} fill="none" stroke={l.color} strokeWidth="1" shapeRendering="crispEdges" />
                ))}
                <polygon points={arrowPts(1343, 706, 1385, 720, 13, 6, 2)} fill="#ff3333" />
              </svg>
              <div className="absolute left-0 top-0 z-20 flex h-[17px] items-center whitespace-nowrap text-[12px]">
                <span className="text-[#a8c0d8]">MACD(12,26,9)</span>
                <span className="ml-[3px] text-[#ff3333]">MACD: +5.83</span>
                <Arrow up={false} />
                <span className="ml-[4px] text-[#ffffff]">DIFF: -5.62</span>
                <Arrow up />
                <span className="ml-[6px] text-[#e8e840]">DEA: -8.54</span>
                <Arrow up />
              </div>
              <div className="absolute right-0 top-0 z-20 flex h-[16px] w-[66px] items-center justify-center border-b border-l border-[#800000] text-[12px] text-[#b8b8b8]">指标说明</div>
            </div>
            <div className="relative flex w-[56px] shrink-0 flex-col items-end overflow-hidden pr-[1px] pt-[10px]">
              <AxisLabel cls="h-[36px] w-[37px] text-[#ff3333]">+14</AxisLabel>
              <AxisLabel cls="h-[34px] text-[#ff3333]">+4.60</AxisLabel>
              <AxisLabel cls="text-[#00dd00]">-5.79</AxisLabel>
              <div className="absolute left-[38px] top-[3px] flex h-[46px] w-[46px] items-center rounded-full border-2 border-white bg-[radial-gradient(circle_at_40%_30%,#a8e8a0,#2f9a30)] pl-[3px] text-[12px] font-bold leading-none text-white">64</div>
            </div>
          </div>

          {/* DATES */}
          <div className="flex h-[16px] shrink-0 items-center pl-[2px] text-[12px] text-[#ff3333]">
            <span className="w-[137px]">06</span>
            <span className="w-[154px]">07</span>
            <span className="w-[161px]">08</span>
            <span className="w-[141px]">09</span>
            <span className="w-[161px]">10</span>
            <span className="w-[154px]">11</span>
            <span className="w-[146px]">12</span>
            <span className="w-[161px]">01</span>
            <span>02</span>
          </div>
        </div>
      </div>

      {/* INDEX ROW */}
      <div className="flex h-[19px] shrink-0 items-center border-y border-[#800000] text-[13px] font-bold text-white">
        <div className="flex h-full w-[368px] shrink-0 items-center">
          <span className="w-[36px] pl-[3px] text-[14px] font-normal text-[#8c8c8c]">沪</span>
          <span className="w-[95px] tracking-[0.4px]">2953.82</span>
          <span className="w-[82px]">+0.00</span>
          <span className="w-[85px]">+0.00%</span>
          <span className="w-[50px] text-center text-[14px] text-[#22ddff]">0</span>
        </div>
        <div className="h-full w-[369px] shrink-0">
          <IndexStat name="深" nameCls="w-[19px]" cell="w-[87px]" />
        </div>
        <div className="h-full w-[369px] shrink-0">
          <IndexStat name="创" nameCls="w-[19px]" cell="w-[87px]" />
        </div>
        <div className="h-full flex-1">
          <IndexStat name="中小板指" nameCls="w-[61px]" cell="w-[68px]" />
        </div>
      </div>

      {/* TICKER ROW */}
      <div className="flex h-[20px] shrink-0 items-center border-t border-[#800000] text-[12px]">
        <div className="flex h-full shrink-0 items-center whitespace-nowrap text-[#b0b0b0]">
          <span className="flex h-full w-[31px] items-center justify-center border-r border-[#800000]">解盘</span>
          <span className="flex h-full w-[56px] items-center justify-center border-r border-[#800000]">股市日记</span>
          <span className="flex h-full w-[44px] items-center justify-center border-r border-[#800000]">股灵通</span>
          <span className="flex h-full w-[31px] items-center justify-center border-r border-[#800000]">行情</span>
          <span className="flex h-full w-[56px] items-center justify-center border-r border-[#800000]">7*24小时</span>
          <span className="flex h-full w-[56px] items-center justify-center border-r border-[#800000]">智能助手</span>
        </div>
        <div className="flex w-[883px] shrink-0 overflow-hidden whitespace-nowrap pl-[2px] text-[13px] font-bold leading-[17px] text-[#ffff00]">
          <span className="w-[393px] shrink-0">香港交易所宣布委任戴志坚和罗力为香港交易所联席总裁</span>
          <span className="w-[315px] shrink-0">农行掌银，用最美好的时光，陪伴最爱的人</span>
          <span>08:13 港交所：未来三年将聚</span>
        </div>
        <div className="flex h-full w-[216px] shrink-0 items-center justify-between border border-[#888] bg-[#b4b4b4] px-[4px] text-[12px] text-[#222]">
          代码/名称/简拼/功能
          <svg width="12" height="12" viewBox="0 0 12 12" fill="none" stroke="#666" strokeWidth="1.500">
            <circle cx="4.500" cy="4.500" r="3.500" />
            <path d="m7 7 4 4" strokeWidth="2" />
          </svg>
        </div>
        <span className="ml-[6px] text-[13px] font-bold tracking-[0.5px] text-[#c8c8c8]">08:40:20</span>
      </div>

      {/* TASKBAR STRIP */}
      <div className="flex h-[3px] shrink-0 bg-[#3f73c4]">
        <div className="h-full w-[93px] bg-[#4fa84f]" />
        <div className="ml-[1180px] h-full flex-1 bg-[#38b8e8]" />
      </div>
    </div>
  );
}
